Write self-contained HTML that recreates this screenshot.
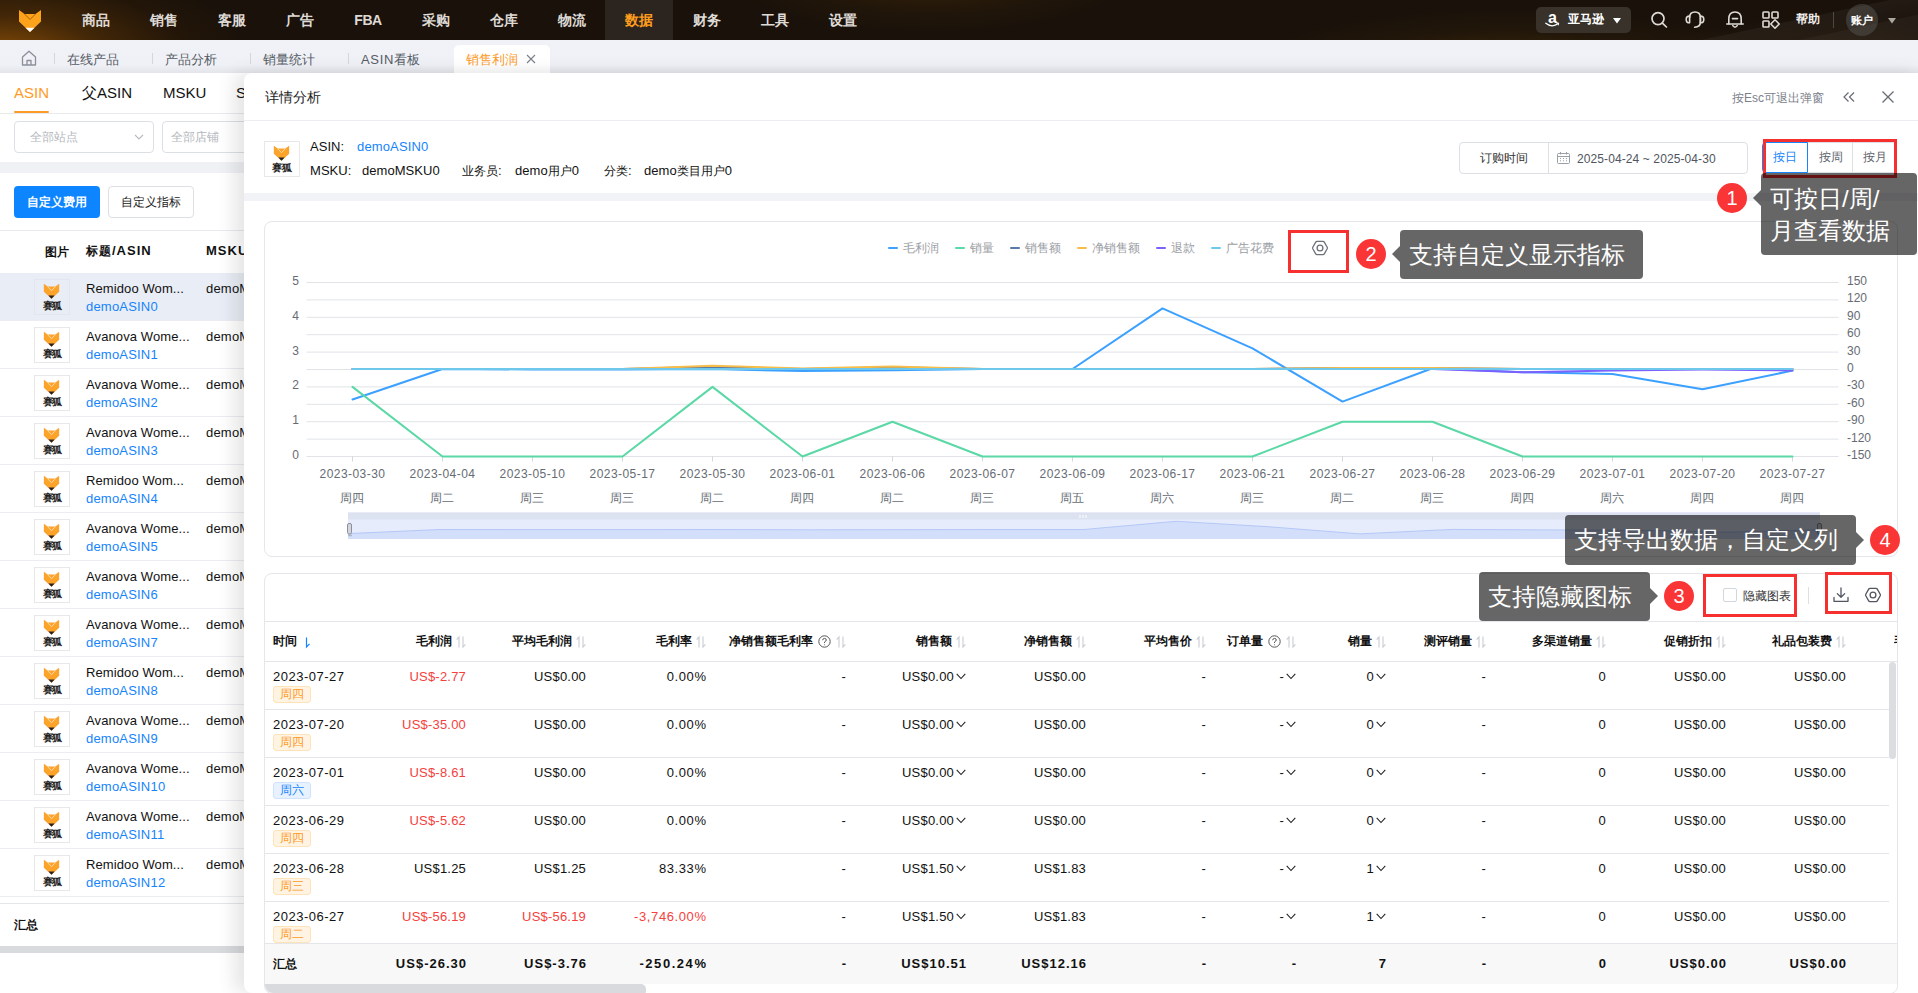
<!DOCTYPE html>
<html lang="zh">
<head>
<meta charset="utf-8">
<title>销售利润</title>
<style>
*{box-sizing:border-box;margin:0;padding:0}
html,body{width:1918px;height:993px;overflow:hidden;background:#fff}
body{font-family:"Liberation Sans",sans-serif;font-size:12px;color:#111;position:relative}
.abs{position:absolute}
svg{display:block;overflow:visible}
/* top nav */
#nav{position:absolute;left:0;top:0;width:1918px;height:40px;background:#19110a;overflow:hidden}
#nav .glow1{position:absolute;left:-60px;top:-40px;width:300px;height:140px;background:radial-gradient(ellipse at 20% 70%,rgba(170,95,5,.8) 0%,rgba(110,62,5,.5) 30%,rgba(60,34,4,.28) 55%,rgba(21,14,6,0) 75%)}
#nav .glow2{position:absolute;left:1250px;top:10px;width:520px;height:60px;background:radial-gradient(ellipse at 50% 100%,rgba(110,70,10,.55) 0%,rgba(60,40,8,.25) 45%,rgba(21,14,6,0) 75%)}
#nav .mi{position:absolute;top:0;height:40px;width:68px;line-height:40px;text-align:center;color:#dedad5;font-size:14px;font-weight:bold;letter-spacing:0}
#nav .mi.on{background:#2c251f;color:#ff9d1e}
/* tab bar */
#tabs{position:absolute;left:0;top:40px;width:1918px;height:33px;background:linear-gradient(#f1f2f7 0,#f0f1f6 75%,#e4e5ea 100%)}
#tabs .t{position:absolute;top:0;height:39px;line-height:39px;font-size:13px;color:#555c66;white-space:nowrap}
#tabs .sep{position:absolute;top:13px;width:1px;height:11px;background:#d3d6dc}
/* left page */
#left{position:absolute;left:0;top:73px;width:260px;height:920px;background:#fff;overflow:hidden}
.lrow{position:absolute;left:0;width:260px;height:48px;border-bottom:1px solid #ebedf0}
.lrow .im{position:absolute;left:34px;top:6px;width:36px;height:36px;border:1px solid #e8e8e8;background:#fff}
.lrow .t1{position:absolute;left:86px;top:8px;font-size:13px;color:#111;white-space:nowrap;letter-spacing:.1px}
.lrow .t2{position:absolute;left:86px;top:26px;font-size:13px;color:#1684fc;white-space:nowrap;letter-spacing:.2px}
.lrow .t3{position:absolute;left:206px;top:8px;font-size:13px;color:#111;white-space:nowrap;letter-spacing:.2px}
.fx{left:0;top:20px;width:34px;text-align:center;font-size:10px;font-weight:bold;color:#222;line-height:12px;letter-spacing:-.5px;font-family:"Liberation Serif",serif}

.it{font-size:13px;line-height:16px;color:#111;white-space:nowrap;letter-spacing:.05px}
.c12{font-size:12px;letter-spacing:0}
.ax{font-size:12px;line-height:14px;color:#666b73;white-space:nowrap}
.th{top:634px;font-size:12px;line-height:15px;font-weight:bold;color:#111;white-space:nowrap}
.td{font-size:13px;line-height:16px;color:#111;white-space:nowrap;letter-spacing:.2px}
.sb{font-weight:bold;letter-spacing:1px;margin-right:-1px}
.tag{width:38px;height:17px;border-radius:3px;font-size:12px;line-height:15px;text-align:center;border:1px solid}
.tag.o{background:#fff4e3;border-color:#ffe3b8;color:#fd9a27}
.tag.b{background:#e8f2ff;border-color:#cfe3ff;color:#1684fc}
.tip{background:rgba(0,0,0,.6);border-radius:4px;color:#fff;font-size:24px;white-space:nowrap}
.bd{width:30px;height:30px;border-radius:15px;background:#fa3535;color:#fff;font-size:20px;line-height:30px;text-align:center}
</style>
</head>
<body>
<!-- NAV -->
<div id="nav">
  <div class="glow1"></div><div class="glow2"></div><div class="abs" style="left:720px;top:-30px;width:420px;height:64px;background:radial-gradient(ellipse at 50% 0%,rgba(95,60,10,.5) 0%,rgba(60,38,8,.25) 45%,rgba(21,14,6,0) 72%)"></div><div class="abs" style="left:1640px;top:14px;width:340px;height:50px;background:radial-gradient(ellipse at 60% 100%,rgba(80,60,35,.35) 0%,rgba(21,14,6,0) 70%)"></div>
  <svg class="abs" style="left:18px;top:9px" width="24" height="24" viewBox="0 0 24 24">
    <path d="M1 1 L6.5 5 L17.5 5 L23 1 L23 12.5 L12 23 L1 12.5 Z" fill="#fda31b"/>
    <path d="M6.5 5 L12 10.5 L17.5 5" fill="none" stroke="#a8610c" stroke-width="1"/>
    <path d="M7.5 18.7 L16.5 18.7 L12 23 Z" fill="#fff"/>
  </svg>
  <div class="mi" style="left:62px">商品</div>
  <div class="mi" style="left:130px">销售</div>
  <div class="mi" style="left:198px">客服</div>
  <div class="mi" style="left:266px">广告</div>
  <div class="mi" style="left:334px;letter-spacing:-.5px">FBA</div>
  <div class="mi" style="left:402px">采购</div>
  <div class="mi" style="left:470px">仓库</div>
  <div class="mi" style="left:538px">物流</div>
  <div class="mi on" style="left:605px">数据</div>
  <div class="mi" style="left:673px">财务</div>
  <div class="mi" style="left:741px">工具</div>
  <div class="mi" style="left:809px">设置</div>

  <div class="abs" style="left:1536px;top:7px;width:95px;height:26px;border-radius:5px;background:#38322a"></div>
  <div class="abs" style="left:1547px;top:7px;width:11px;font-size:16px;font-weight:bold;color:#fff;line-height:22px;text-align:center">a</div>
  <svg class="abs" style="left:1545px;top:22px" width="15" height="6" viewBox="0 0 15 6" fill="none" stroke="#fff" stroke-width="1.3" stroke-linecap="round"><path d="M0.8 1.2 Q7 6.2 13.2 1.6"/><path d="M11.5 0.9 L13.7 1 L13.3 3" stroke-width="1"/></svg>
  <div class="abs" style="left:1568px;top:12px;font-size:12px;font-weight:bold;color:#fff;line-height:15px;white-space:nowrap">亚马逊</div>
  <svg class="abs" style="left:1613px;top:18px" width="8" height="6" viewBox="0 0 8 6"><path d="M0 0 H8 L4 5.6 Z" fill="#fff"/></svg>
  <svg class="abs" style="left:1650px;top:11px" width="18" height="18" viewBox="0 0 18 18" fill="none" stroke="#dedbd7" stroke-width="1.7" stroke-linecap="round"><circle cx="8" cy="7.6" r="6"/><path d="M12.4 12.2 L16.4 16"/></svg>
  <svg class="abs" style="left:1685px;top:11px" width="20" height="18" viewBox="0 0 20 18" fill="none" stroke="#dedbd7" stroke-width="1.6" stroke-linecap="round" stroke-linejoin="round"><path d="M4.6 6.6 Q4.6 1 10 1 Q15.4 1 15.4 6.6 V11 Q15.4 16 9.6 16.2"/><path d="M4.6 5 Q1.2 5 1.2 8.4 Q1.2 11.8 4.6 11.8 Z"/><path d="M15.4 5 Q18.8 5 18.8 8.4 Q18.8 11.8 15.4 11.8 Z"/></svg>
  <svg class="abs" style="left:1726px;top:11px" width="18" height="18" viewBox="0 0 18 18" fill="none" stroke="#dedbd7" stroke-width="1.6" stroke-linecap="round" stroke-linejoin="round"><path d="M2.8 12.8 V8 Q2.8 1 9 1 Q15.2 1 15.2 8 V12.8"/><path d="M0.8 13 H17.2"/><path d="M6.8 14.6 Q9 17.6 11.2 14.6"/><path d="M6.4 7.6 H11.6"/></svg>
  <svg class="abs" style="left:1762px;top:11px" width="18" height="18" viewBox="0 0 18 18" fill="none" stroke="#dedbd7" stroke-width="1.6" stroke-linejoin="round"><rect x="1" y="1" width="6" height="6" rx="0.8"/><rect x="10" y="1" width="6" height="6" rx="0.8"/><rect x="1" y="10" width="6" height="6" rx="0.8"/><path d="M13 8.8 L17.2 13 L13 17.2 L8.8 13 Z"/></svg>
  <div class="abs" style="left:1796px;top:12px;font-size:12px;font-weight:bold;color:#f0eeec;line-height:15px;white-space:nowrap">帮助</div>
  <div class="abs" style="left:1833px;top:12px;width:1px;height:16px;background:#4a433b"></div>
  <div class="abs" style="left:1846px;top:4px;width:32px;height:32px;border-radius:16px;background:#37312b;font-size:11px;font-weight:bold;color:#fff;line-height:33px;text-align:center;letter-spacing:-.3px">账户</div>
  <svg class="abs" style="left:1888px;top:18px" width="8" height="6" viewBox="0 0 8 6"><path d="M0 0 H8 L4 5.4 Z" fill="#a9a49e"/></svg>
  <div class="abs" style="left:1620px;top:0;width:298px;height:40px;background:linear-gradient(168deg,rgba(255,255,255,0) 55%,rgba(255,255,255,.045) 56%,rgba(255,255,255,.02) 75%,rgba(255,255,255,.05) 76%,rgba(255,255,255,.03) 100%)"></div>
</div>
<!-- TABS -->
<div id="tabs">
  <svg class="abs" style="left:21px;top:10px" width="16" height="16" viewBox="0 0 16 16" fill="none" stroke="#8a8f99" stroke-width="1.3" stroke-linejoin="round"><path d="M1.5 7 L8 1.3 L14.5 7 L14.5 15 L1.5 15 Z"/><path d="M6 15 L6 10.5 L10 10.5 L10 15"/></svg>
  <div class="sep" style="left:54px"></div>
  <div class="t" style="left:67px">在线产品</div>
  <div class="sep" style="left:152px"></div>
  <div class="t" style="left:165px">产品分析</div>
  <div class="sep" style="left:250px"></div>
  <div class="t" style="left:263px">销量统计</div>
  <div class="sep" style="left:348px"></div>
  <div class="t" style="left:361px"><span style="letter-spacing:.7px">ASIN</span>看板</div>
  <div class="abs" style="left:454px;top:5px;width:96px;height:28px;background:linear-gradient(#fff 70%,#fafafb 100%);border-radius:5px 5px 0 0"></div>
  <div class="t" style="left:466px;color:#fd9a27">销售利润</div>
  <svg class="abs" style="left:526px;top:14px" width="10" height="10" viewBox="0 0 10 10" stroke="#7a8088" stroke-width="1.1"><path d="M1 1 L9 9 M9 1 L1 9"/></svg>
</div>
<!-- LEFT -->
<div id="left">
<div class="abs" style="left:14px;top:11px;font-size:15px;color:#fd9a27;letter-spacing:0">ASIN</div>
<div class="abs" style="left:82px;top:11px;font-size:15px;color:#111;letter-spacing:0">父ASIN</div>
<div class="abs" style="left:163px;top:11px;font-size:15px;color:#111;letter-spacing:0">MSKU</div>
<div class="abs" style="left:236px;top:11px;font-size:15px;color:#111">SKU</div>
<div class="abs" style="left:0;top:40px;width:260px;height:1px;background:#e8eaee"></div>
<div class="abs" style="left:14px;top:38px;width:35px;height:2px;background:#fd9a27;border-radius:1px"></div>
<div class="abs" style="left:14px;top:48px;width:140px;height:32px;border:1px solid #dcdfe4;border-radius:4px"><span class="abs" style="left:15px;top:7px;font-size:12px;color:#b4b7bd">全部站点</span><svg class="abs" style="left:119px;top:12px" width="10" height="7" viewBox="0 0 10 7" fill="none" stroke="#b9bcc2" stroke-width="1.2"><path d="M1 1 L5 5 L9 1"/></svg></div>
<div class="abs" style="left:162px;top:48px;width:140px;height:32px;border:1px solid #dcdfe4;border-radius:4px"><span class="abs" style="left:8px;top:7px;font-size:12px;color:#b4b7bd">全部店铺</span></div>
<div class="abs" style="left:0;top:89px;width:260px;height:11px;background:#f0f1f5"></div>
<div class="abs" style="left:14px;top:113px;width:86px;height:32px;background:#0d85ff;border-radius:4px;color:#fff;font-size:12px;font-weight:bold;line-height:32px;text-align:center">自定义费用</div>
<div class="abs" style="left:108px;top:113px;width:86px;height:32px;background:#fff;border:1px solid #dcdfe4;border-radius:4px;color:#222;font-size:12px;line-height:30px;text-align:center">自定义指标</div>
<div class="abs" style="left:0;top:157px;width:260px;height:1px;background:#e8eaee"></div>
<div class="abs" style="left:45px;top:171px;font-size:12px;font-weight:bold;color:#111">图片</div>
<div class="abs" style="left:86px;top:170px;font-size:13px;font-weight:bold;color:#111;letter-spacing:1px"><span style="font-size:12px">标题</span>/ASIN</div>
<div class="abs" style="left:206px;top:170px;font-size:13px;font-weight:bold;color:#111;letter-spacing:1px">MSKU</div>
<div class="lrow" style="top:200px;background:#e9edf5;"><div class="im" style="background:transparent;border-color:#e3e6ee"><svg class="abs" style="left:8px;top:3px" width="17" height="16" viewBox="0 0 24 23"><path d="M1 1 L6.5 5 L17.5 5 L23 1 L23 12.5 L12 22.5 L1 12.5 Z" fill="#fba32a"/><path d="M6.5 5.5 L12 11 L17.5 5.5" fill="none" stroke="#ffe2b0" stroke-width="1.3"/><path d="M7.5 18 L16.5 18 L12 22.5 Z" fill="#222"/></svg><div class="abs fx">赛狐</div></div><div class="t1">Remidoo Wom...</div><div class="t2">demoASIN0</div><div class="t3">demoMSKU0</div></div>
<div class="lrow" style="top:248px;"><div class="im"><svg class="abs" style="left:8px;top:3px" width="17" height="16" viewBox="0 0 24 23"><path d="M1 1 L6.5 5 L17.5 5 L23 1 L23 12.5 L12 22.5 L1 12.5 Z" fill="#fba32a"/><path d="M6.5 5.5 L12 11 L17.5 5.5" fill="none" stroke="#ffe2b0" stroke-width="1.3"/><path d="M7.5 18 L16.5 18 L12 22.5 Z" fill="#222"/></svg><div class="abs fx">赛狐</div></div><div class="t1">Avanova Wome...</div><div class="t2">demoASIN1</div><div class="t3">demoMSKU1</div></div>
<div class="lrow" style="top:296px;"><div class="im"><svg class="abs" style="left:8px;top:3px" width="17" height="16" viewBox="0 0 24 23"><path d="M1 1 L6.5 5 L17.5 5 L23 1 L23 12.5 L12 22.5 L1 12.5 Z" fill="#fba32a"/><path d="M6.5 5.5 L12 11 L17.5 5.5" fill="none" stroke="#ffe2b0" stroke-width="1.3"/><path d="M7.5 18 L16.5 18 L12 22.5 Z" fill="#222"/></svg><div class="abs fx">赛狐</div></div><div class="t1">Avanova Wome...</div><div class="t2">demoASIN2</div><div class="t3">demoMSKU2</div></div>
<div class="lrow" style="top:344px;"><div class="im"><svg class="abs" style="left:8px;top:3px" width="17" height="16" viewBox="0 0 24 23"><path d="M1 1 L6.5 5 L17.5 5 L23 1 L23 12.5 L12 22.5 L1 12.5 Z" fill="#fba32a"/><path d="M6.5 5.5 L12 11 L17.5 5.5" fill="none" stroke="#ffe2b0" stroke-width="1.3"/><path d="M7.5 18 L16.5 18 L12 22.5 Z" fill="#222"/></svg><div class="abs fx">赛狐</div></div><div class="t1">Avanova Wome...</div><div class="t2">demoASIN3</div><div class="t3">demoMSKU3</div></div>
<div class="lrow" style="top:392px;"><div class="im"><svg class="abs" style="left:8px;top:3px" width="17" height="16" viewBox="0 0 24 23"><path d="M1 1 L6.5 5 L17.5 5 L23 1 L23 12.5 L12 22.5 L1 12.5 Z" fill="#fba32a"/><path d="M6.5 5.5 L12 11 L17.5 5.5" fill="none" stroke="#ffe2b0" stroke-width="1.3"/><path d="M7.5 18 L16.5 18 L12 22.5 Z" fill="#222"/></svg><div class="abs fx">赛狐</div></div><div class="t1">Remidoo Wom...</div><div class="t2">demoASIN4</div><div class="t3">demoMSKU4</div></div>
<div class="lrow" style="top:440px;"><div class="im"><svg class="abs" style="left:8px;top:3px" width="17" height="16" viewBox="0 0 24 23"><path d="M1 1 L6.5 5 L17.5 5 L23 1 L23 12.5 L12 22.5 L1 12.5 Z" fill="#fba32a"/><path d="M6.5 5.5 L12 11 L17.5 5.5" fill="none" stroke="#ffe2b0" stroke-width="1.3"/><path d="M7.5 18 L16.5 18 L12 22.5 Z" fill="#222"/></svg><div class="abs fx">赛狐</div></div><div class="t1">Avanova Wome...</div><div class="t2">demoASIN5</div><div class="t3">demoMSKU5</div></div>
<div class="lrow" style="top:488px;"><div class="im"><svg class="abs" style="left:8px;top:3px" width="17" height="16" viewBox="0 0 24 23"><path d="M1 1 L6.5 5 L17.5 5 L23 1 L23 12.5 L12 22.5 L1 12.5 Z" fill="#fba32a"/><path d="M6.5 5.5 L12 11 L17.5 5.5" fill="none" stroke="#ffe2b0" stroke-width="1.3"/><path d="M7.5 18 L16.5 18 L12 22.5 Z" fill="#222"/></svg><div class="abs fx">赛狐</div></div><div class="t1">Avanova Wome...</div><div class="t2">demoASIN6</div><div class="t3">demoMSKU6</div></div>
<div class="lrow" style="top:536px;"><div class="im"><svg class="abs" style="left:8px;top:3px" width="17" height="16" viewBox="0 0 24 23"><path d="M1 1 L6.5 5 L17.5 5 L23 1 L23 12.5 L12 22.5 L1 12.5 Z" fill="#fba32a"/><path d="M6.5 5.5 L12 11 L17.5 5.5" fill="none" stroke="#ffe2b0" stroke-width="1.3"/><path d="M7.5 18 L16.5 18 L12 22.5 Z" fill="#222"/></svg><div class="abs fx">赛狐</div></div><div class="t1">Avanova Wome...</div><div class="t2">demoASIN7</div><div class="t3">demoMSKU7</div></div>
<div class="lrow" style="top:584px;"><div class="im"><svg class="abs" style="left:8px;top:3px" width="17" height="16" viewBox="0 0 24 23"><path d="M1 1 L6.5 5 L17.5 5 L23 1 L23 12.5 L12 22.5 L1 12.5 Z" fill="#fba32a"/><path d="M6.5 5.5 L12 11 L17.5 5.5" fill="none" stroke="#ffe2b0" stroke-width="1.3"/><path d="M7.5 18 L16.5 18 L12 22.5 Z" fill="#222"/></svg><div class="abs fx">赛狐</div></div><div class="t1">Remidoo Wom...</div><div class="t2">demoASIN8</div><div class="t3">demoMSKU8</div></div>
<div class="lrow" style="top:632px;"><div class="im"><svg class="abs" style="left:8px;top:3px" width="17" height="16" viewBox="0 0 24 23"><path d="M1 1 L6.5 5 L17.5 5 L23 1 L23 12.5 L12 22.5 L1 12.5 Z" fill="#fba32a"/><path d="M6.5 5.5 L12 11 L17.5 5.5" fill="none" stroke="#ffe2b0" stroke-width="1.3"/><path d="M7.5 18 L16.5 18 L12 22.5 Z" fill="#222"/></svg><div class="abs fx">赛狐</div></div><div class="t1">Avanova Wome...</div><div class="t2">demoASIN9</div><div class="t3">demoMSKU9</div></div>
<div class="lrow" style="top:680px;"><div class="im"><svg class="abs" style="left:8px;top:3px" width="17" height="16" viewBox="0 0 24 23"><path d="M1 1 L6.5 5 L17.5 5 L23 1 L23 12.5 L12 22.5 L1 12.5 Z" fill="#fba32a"/><path d="M6.5 5.5 L12 11 L17.5 5.5" fill="none" stroke="#ffe2b0" stroke-width="1.3"/><path d="M7.5 18 L16.5 18 L12 22.5 Z" fill="#222"/></svg><div class="abs fx">赛狐</div></div><div class="t1">Avanova Wome...</div><div class="t2">demoASIN10</div><div class="t3">demoMSKU10</div></div>
<div class="lrow" style="top:728px;"><div class="im"><svg class="abs" style="left:8px;top:3px" width="17" height="16" viewBox="0 0 24 23"><path d="M1 1 L6.5 5 L17.5 5 L23 1 L23 12.5 L12 22.5 L1 12.5 Z" fill="#fba32a"/><path d="M6.5 5.5 L12 11 L17.5 5.5" fill="none" stroke="#ffe2b0" stroke-width="1.3"/><path d="M7.5 18 L16.5 18 L12 22.5 Z" fill="#222"/></svg><div class="abs fx">赛狐</div></div><div class="t1">Avanova Wome...</div><div class="t2">demoASIN11</div><div class="t3">demoMSKU11</div></div>
<div class="lrow" style="top:776px;"><div class="im"><svg class="abs" style="left:8px;top:3px" width="17" height="16" viewBox="0 0 24 23"><path d="M1 1 L6.5 5 L17.5 5 L23 1 L23 12.5 L12 22.5 L1 12.5 Z" fill="#fba32a"/><path d="M6.5 5.5 L12 11 L17.5 5.5" fill="none" stroke="#ffe2b0" stroke-width="1.3"/><path d="M7.5 18 L16.5 18 L12 22.5 Z" fill="#222"/></svg><div class="abs fx">赛狐</div></div><div class="t1">Remidoo Wom...</div><div class="t2">demoASIN12</div><div class="t3">demoMSKU12</div></div>
<div class="lrow" style="top:824px;"><div class="im"><svg class="abs" style="left:8px;top:3px" width="17" height="16" viewBox="0 0 24 23"><path d="M1 1 L6.5 5 L17.5 5 L23 1 L23 12.5 L12 22.5 L1 12.5 Z" fill="#fba32a"/><path d="M6.5 5.5 L12 11 L17.5 5.5" fill="none" stroke="#ffe2b0" stroke-width="1.3"/><path d="M7.5 18 L16.5 18 L12 22.5 Z" fill="#222"/></svg><div class="abs fx">赛狐</div></div><div class="t1">Avanova Wome...</div><div class="t2">demoASIN13</div><div class="t3">demoMSKU13</div></div>
<div class="abs" style="left:0;top:830px;width:260px;height:90px;background:#fff;border-top:1px solid #e4e6ea"></div>
<div class="abs" style="left:14px;top:844px;font-size:12px;font-weight:bold;color:#111">汇总</div>
<div class="abs" style="left:0;top:872.5px;width:260px;height:7px;background:#d9dadd"></div>
</div>
<!-- DRAWER -->
<div id="drawer">
<div class="abs" style="left:244px;top:73px;width:1680px;height:920px;background:#fff;border-radius:8px 0 0 8px;box-shadow:-10px 0 18px rgba(0,0,0,.10)"></div>
<div class="abs" style="left:265px;top:89px;font-size:14px;color:#222;line-height:17px">详情分析</div>
<div class="abs" style="left:1732px;top:91px;font-size:12px;color:#7b808a;line-height:14px;white-space:nowrap">按Esc可退出弹窗</div>
<svg class="abs" style="left:1843px;top:92px" width="12" height="10" viewBox="0 0 12 10" fill="none" stroke="#666b74" stroke-width="1.2"><path d="M5.5 0.5 L1 5 L5.5 9.5 M11 0.5 L6.5 5 L11 9.5"/></svg>
<svg class="abs" style="left:1882px;top:91px" width="12" height="12" viewBox="0 0 12 12" fill="none" stroke="#666b74" stroke-width="1.3"><path d="M0.5 0.5 L11.5 11.5 M11.5 0.5 L0.5 11.5"/></svg>
<div class="abs" style="left:244px;top:120px;width:1674px;height:1px;background:#ebedf0"></div>
<div class="abs" style="left:264px;top:141px;width:36px;height:36px;border:1px solid #e8e8e8;background:#fff"><svg class="abs" style="left:8px;top:3px" width="17" height="16" viewBox="0 0 24 23"><path d="M1 1 L6.5 5 L17.5 5 L23 1 L23 12.5 L12 22.5 L1 12.5 Z" fill="#fba32a"/><path d="M6.5 5.5 L12 11 L17.5 5.5" fill="none" stroke="#ffe2b0" stroke-width="1.3"/><path d="M7.5 18 L16.5 18 L12 22.5 Z" fill="#222"/></svg><div class="abs fx" style="width:33px">赛狐</div></div>
<div class="abs it" style="left:310px;top:139px">ASIN:</div><div class="abs it" style="left:357px;top:139px;color:#1684fc;letter-spacing:.15px">demoASIN0</div>
<div class="abs it" style="left:310px;top:163px">MSKU:</div><div class="abs it" style="left:362px;top:163px">demoMSKU0</div>
<div class="abs it" style="left:462px;top:163px"><span class="c12">业务员</span>:</div><div class="abs it" style="left:515px;top:163px">demo<span class="c12">用户</span>0</div>
<div class="abs it" style="left:604px;top:163px"><span class="c12">分类</span>:</div><div class="abs it" style="left:644px;top:163px">demo<span class="c12">类目用户</span>0</div>
<div class="abs" style="left:1459px;top:142px;width:289px;height:32px;border:1px solid #dcdfe4;border-radius:4px"></div>
<div class="abs" style="left:1548px;top:142px;width:1px;height:32px;background:#dcdfe4"></div>
<div class="abs" style="left:1459px;top:142px;width:89px;height:32px;line-height:32px;text-align:center;font-size:12px;color:#333">订购时间</div>
<svg class="abs" style="left:1557px;top:152px" width="13" height="12" viewBox="0 0 13 12" fill="none" stroke="#9a9fa8" stroke-width="1"><rect x="0.5" y="1.5" width="12" height="10" rx="1"/><path d="M0.5 4.5 L12.5 4.5 M3.5 0 L3.5 2.5 M9.5 0 L9.5 2.5"/><path d="M3 6.5h1M6 6.5h1M9 6.5h1M3 8.8h1M6 8.8h1M9 8.8h1" stroke-width="1"/></svg>
<div class="abs" style="left:1577px;top:142px;height:32px;line-height:34px;font-size:12px;color:#50555e;white-space:nowrap;letter-spacing:.1px">2025-04-24 ~ 2025-04-30</div>
<div class="abs" style="left:1762px;top:142px;width:135px;height:31px;border:1px solid #dcdfe4;border-radius:4px"></div>
<div class="abs" style="left:1852px;top:142px;width:1px;height:31px;background:#dcdfe4"></div>
<div class="abs" style="left:1762px;top:142px;width:46px;height:31px;border:1px solid #1684fc;border-radius:4px 0 0 4px"></div>
<div class="abs" style="left:1762px;top:142px;width:45px;height:31px;line-height:31px;text-align:center;font-size:12px;color:#1684fc">按日</div>
<div class="abs" style="left:1808px;top:142px;width:45px;height:31px;line-height:31px;text-align:center;font-size:12px;color:#5d626b">按周</div>
<div class="abs" style="left:1852px;top:142px;width:45px;height:31px;line-height:31px;text-align:center;font-size:12px;color:#5d626b">按月</div>
<div class="abs" style="left:244px;top:193px;width:1674px;height:8px;background:#f2f3f7"></div>
<div class="abs" style="left:264px;top:221px;width:1634px;height:336px;border:1px solid #e4e6ea;border-radius:8px"></div>
<div class="abs" style="left:888px;top:247px;width:10px;height:2px;border-radius:1px;background:#3ba0ff"></div><div class="abs" style="left:903px;top:241px;font-size:12px;line-height:14px;color:#9b9ea4;white-space:nowrap">毛利润</div>
<div class="abs" style="left:955px;top:247px;width:10px;height:2px;border-radius:1px;background:#5ad8a6"></div><div class="abs" style="left:970px;top:241px;font-size:12px;line-height:14px;color:#9b9ea4;white-space:nowrap">销量</div>
<div class="abs" style="left:1010px;top:247px;width:10px;height:2px;border-radius:1px;background:#5b7aa8"></div><div class="abs" style="left:1025px;top:241px;font-size:12px;line-height:14px;color:#9b9ea4;white-space:nowrap">销售额</div>
<div class="abs" style="left:1077px;top:247px;width:10px;height:2px;border-radius:1px;background:#f6bd4a"></div><div class="abs" style="left:1092px;top:241px;font-size:12px;line-height:14px;color:#9b9ea4;white-space:nowrap">净销售额</div>
<div class="abs" style="left:1156px;top:247px;width:10px;height:2px;border-radius:1px;background:#7b61ff"></div><div class="abs" style="left:1171px;top:241px;font-size:12px;line-height:14px;color:#9b9ea4;white-space:nowrap">退款</div>
<div class="abs" style="left:1211px;top:247px;width:10px;height:2px;border-radius:1px;background:#6dc8ec"></div><div class="abs" style="left:1226px;top:241px;font-size:12px;line-height:14px;color:#9b9ea4;white-space:nowrap">广告花费</div>
<svg class="abs" style="left:1312px;top:240px" width="16" height="16" viewBox="0 0 16 16" fill="none" stroke="#6b7079" stroke-width="1.3" stroke-linejoin="round"><path d="M5 1.4 L11 1.4 Q11.9 1.4 12.3 2.1 L15.2 7.2 Q15.6 8 15.2 8.8 L12.3 13.9 Q11.9 14.6 11 14.6 L5 14.6 Q4.1 14.6 3.7 13.9 L0.8 8.8 Q0.4 8 0.8 7.2 L3.7 2.1 Q4.1 1.4 5 1.4 Z"/><circle cx="8" cy="8" r="2.9"/></svg>
<svg class="abs" style="left:0;top:0" width="1918" height="993" viewBox="0 0 1918 993"><path d="M306.5 282.5 H1838.5" stroke="#e1e3e7" stroke-width="1" fill="none"/><path d="M306.5 299.9 H1838.5" stroke="#e1e3e7" stroke-width="1" fill="none"/><path d="M306.5 317.3 H1838.5" stroke="#e1e3e7" stroke-width="1" fill="none"/><path d="M306.5 334.7 H1838.5" stroke="#e1e3e7" stroke-width="1" fill="none"/><path d="M306.5 352.1 H1838.5" stroke="#e1e3e7" stroke-width="1" fill="none"/><path d="M306.5 369.5 H1838.5" stroke="#e1e3e7" stroke-width="1" fill="none"/><path d="M306.5 386.9 H1838.5" stroke="#e1e3e7" stroke-width="1" fill="none"/><path d="M306.5 404.3 H1838.5" stroke="#e1e3e7" stroke-width="1" fill="none"/><path d="M306.5 421.7 H1838.5" stroke="#e1e3e7" stroke-width="1" fill="none"/><path d="M306.5 439.1 H1838.5" stroke="#e1e3e7" stroke-width="1" fill="none"/><path d="M306.5 456.5 H1838.5" stroke="#e1e3e7" stroke-width="1" fill="none"/><path d="M352.5 456.5 V461.5" stroke="#d4d7dd" stroke-width="1"/><path d="M442.5 456.5 V461.5" stroke="#d4d7dd" stroke-width="1"/><path d="M532.5 456.5 V461.5" stroke="#d4d7dd" stroke-width="1"/><path d="M622.5 456.5 V461.5" stroke="#d4d7dd" stroke-width="1"/><path d="M712.5 456.5 V461.5" stroke="#d4d7dd" stroke-width="1"/><path d="M802.5 456.5 V461.5" stroke="#d4d7dd" stroke-width="1"/><path d="M892.5 456.5 V461.5" stroke="#d4d7dd" stroke-width="1"/><path d="M982.5 456.5 V461.5" stroke="#d4d7dd" stroke-width="1"/><path d="M1072.5 456.5 V461.5" stroke="#d4d7dd" stroke-width="1"/><path d="M1162.5 456.5 V461.5" stroke="#d4d7dd" stroke-width="1"/><path d="M1252.5 456.5 V461.5" stroke="#d4d7dd" stroke-width="1"/><path d="M1342.5 456.5 V461.5" stroke="#d4d7dd" stroke-width="1"/><path d="M1432.5 456.5 V461.5" stroke="#d4d7dd" stroke-width="1"/><path d="M1522.5 456.5 V461.5" stroke="#d4d7dd" stroke-width="1"/><path d="M1612.5 456.5 V461.5" stroke="#d4d7dd" stroke-width="1"/><path d="M1702.5 456.5 V461.5" stroke="#d4d7dd" stroke-width="1"/><path d="M1792.5 456.5 V461.5" stroke="#d4d7dd" stroke-width="1"/><path d="M352.5 399.5 L442.5 369.0 L532.5 369.5 L622.5 369.5 L712.5 369.0 L802.5 371.1 L892.5 370.2 L982.5 369.0 L1072.5 369.0 L1162.5 308.4 L1252.5 348.4 L1342.5 401.6 L1432.5 368.3 L1522.5 372.3 L1612.5 374.0 L1702.5 389.3 L1792.5 370.6" stroke="#3ba0ff" stroke-width="2" fill="none" stroke-linejoin="round" stroke-linecap="round"/><path d="M352.5 386.9 L442.5 456.5 L532.5 456.5 L622.5 456.5 L712.5 386.9 L802.5 456.5 L892.5 421.7 L982.5 456.5 L1072.5 456.5 L1162.5 456.5 L1252.5 456.5 L1342.5 421.7 L1432.5 421.7 L1522.5 456.5 L1612.5 456.5 L1702.5 456.5 L1792.5 456.5" stroke="#5ad8a6" stroke-width="2" fill="none" stroke-linejoin="round" stroke-linecap="round"/><path d="M352.5 369.0 L442.5 369.0 L532.5 369.0 L622.5 369.0 L712.5 366.7 L802.5 369.0 L892.5 367.3 L982.5 369.0 L1072.5 369.0 L1162.5 369.0 L1252.5 369.0 L1342.5 368.1 L1432.5 368.1 L1522.5 369.0 L1612.5 369.0 L1702.5 369.0 L1792.5 369.0" stroke="#5b7aa8" stroke-width="2" fill="none" stroke-linejoin="round" stroke-linecap="round"/><path d="M352.5 369.0 L442.5 369.0 L532.5 369.0 L622.5 369.0 L712.5 365.8 L802.5 368.4 L892.5 366.4 L982.5 369.0 L1072.5 369.0 L1162.5 369.0 L1252.5 369.0 L1342.5 367.9 L1432.5 367.9 L1522.5 369.0 L1612.5 369.0 L1702.5 369.0 L1792.5 369.0" stroke="#f6bd4a" stroke-width="2" fill="none" stroke-linejoin="round" stroke-linecap="round"/><path d="M352.5 369.0 L442.5 369.0 L532.5 369.0 L622.5 369.0 L712.5 369.0 L802.5 369.0 L892.5 369.0 L982.5 369.0 L1072.5 369.0 L1162.5 369.0 L1252.5 369.0 L1342.5 369.0 L1432.5 369.0 L1522.5 372.2 L1612.5 370.4 L1702.5 369.6 L1792.5 370.4" stroke="#7b61ff" stroke-width="2" fill="none" stroke-linejoin="round" stroke-linecap="round"/><path d="M352.5 369.0 L442.5 369.0 L532.5 369.0 L622.5 369.0 L712.5 369.0 L802.5 369.0 L892.5 369.0 L982.5 369.0 L1072.5 369.0 L1162.5 369.0 L1252.5 369.0 L1342.5 369.0 L1432.5 369.0 L1522.5 369.0 L1612.5 369.0 L1702.5 369.0 L1792.5 369.0" stroke="#6dc8ec" stroke-width="2" fill="none" stroke-linejoin="round" stroke-linecap="round"/><rect x="348" y="512.5" width="1472" height="26.5" fill="#e7ecfc"/><rect x="348" y="512.5" width="1472" height="7" fill="#dde2f1"/><path d="M348 539 L348.0 533.6 L440.0 529.5 L532.0 529.6 L624.0 529.6 L716.0 529.5 L808.0 529.8 L900.0 529.7 L992.0 529.5 L1084.0 529.5 L1176.0 521.3 L1268.0 526.7 L1360.0 533.9 L1452.0 529.4 L1544.0 529.9 L1636.0 530.2 L1728.0 532.2 L1820.0 529.7 L1820 539 Z" fill="#d3dffa"/><path d="M348.0 533.6 L440.0 529.5 L532.0 529.6 L624.0 529.6 L716.0 529.5 L808.0 529.8 L900.0 529.7 L992.0 529.5 L1084.0 529.5 L1176.0 521.3 L1268.0 526.7 L1360.0 533.9 L1452.0 529.4 L1544.0 529.9 L1636.0 530.2 L1728.0 532.2 L1820.0 529.7" fill="none" stroke="#b4c8f7" stroke-width="1"/><rect x="347.5" y="523.5" width="4" height="10.5" rx="1.5" fill="#d3d6de" stroke="#8b909c" stroke-width="1"/><path d="M348 535.5 h4" stroke="#9aa0ae" stroke-width="1.5" opacity=".6"/><rect x="1817.5" y="523.5" width="4" height="10.5" rx="1.5" fill="#d3d6de" stroke="#8b909c" stroke-width="1"/><path d="M1080 515 v3 M1083 515 v3 M1086 515 v3" stroke="#fff" stroke-width="1"/></svg>
<div class="abs ax" style="left:270px;top:274.0px;width:29px;text-align:right">5</div>
<div class="abs ax" style="left:270px;top:308.8px;width:29px;text-align:right">4</div>
<div class="abs ax" style="left:270px;top:343.6px;width:29px;text-align:right">3</div>
<div class="abs ax" style="left:270px;top:378.4px;width:29px;text-align:right">2</div>
<div class="abs ax" style="left:270px;top:413.2px;width:29px;text-align:right">1</div>
<div class="abs ax" style="left:270px;top:448.0px;width:29px;text-align:right">0</div>
<div class="abs ax" style="left:1847px;top:274.0px">150</div>
<div class="abs ax" style="left:1847px;top:291.4px">120</div>
<div class="abs ax" style="left:1847px;top:308.8px">90</div>
<div class="abs ax" style="left:1847px;top:326.2px">60</div>
<div class="abs ax" style="left:1847px;top:343.6px">30</div>
<div class="abs ax" style="left:1847px;top:361.0px">0</div>
<div class="abs ax" style="left:1847px;top:378.4px">-30</div>
<div class="abs ax" style="left:1847px;top:395.8px">-60</div>
<div class="abs ax" style="left:1847px;top:413.2px">-90</div>
<div class="abs ax" style="left:1847px;top:430.6px">-120</div>
<div class="abs ax" style="left:1847px;top:448.0px">-150</div>
<div class="abs ax" style="left:307.5px;top:467px;width:90px;text-align:center;letter-spacing:.45px">2023-03-30</div><div class="abs ax" style="left:306.5px;top:490.5px;width:90px;text-align:center">周四</div>
<div class="abs ax" style="left:397.5px;top:467px;width:90px;text-align:center;letter-spacing:.45px">2023-04-04</div><div class="abs ax" style="left:396.5px;top:490.5px;width:90px;text-align:center">周二</div>
<div class="abs ax" style="left:487.5px;top:467px;width:90px;text-align:center;letter-spacing:.45px">2023-05-10</div><div class="abs ax" style="left:486.5px;top:490.5px;width:90px;text-align:center">周三</div>
<div class="abs ax" style="left:577.5px;top:467px;width:90px;text-align:center;letter-spacing:.45px">2023-05-17</div><div class="abs ax" style="left:576.5px;top:490.5px;width:90px;text-align:center">周三</div>
<div class="abs ax" style="left:667.5px;top:467px;width:90px;text-align:center;letter-spacing:.45px">2023-05-30</div><div class="abs ax" style="left:666.5px;top:490.5px;width:90px;text-align:center">周二</div>
<div class="abs ax" style="left:757.5px;top:467px;width:90px;text-align:center;letter-spacing:.45px">2023-06-01</div><div class="abs ax" style="left:756.5px;top:490.5px;width:90px;text-align:center">周四</div>
<div class="abs ax" style="left:847.5px;top:467px;width:90px;text-align:center;letter-spacing:.45px">2023-06-06</div><div class="abs ax" style="left:846.5px;top:490.5px;width:90px;text-align:center">周二</div>
<div class="abs ax" style="left:937.5px;top:467px;width:90px;text-align:center;letter-spacing:.45px">2023-06-07</div><div class="abs ax" style="left:936.5px;top:490.5px;width:90px;text-align:center">周三</div>
<div class="abs ax" style="left:1027.5px;top:467px;width:90px;text-align:center;letter-spacing:.45px">2023-06-09</div><div class="abs ax" style="left:1026.5px;top:490.5px;width:90px;text-align:center">周五</div>
<div class="abs ax" style="left:1117.5px;top:467px;width:90px;text-align:center;letter-spacing:.45px">2023-06-17</div><div class="abs ax" style="left:1116.5px;top:490.5px;width:90px;text-align:center">周六</div>
<div class="abs ax" style="left:1207.5px;top:467px;width:90px;text-align:center;letter-spacing:.45px">2023-06-21</div><div class="abs ax" style="left:1206.5px;top:490.5px;width:90px;text-align:center">周三</div>
<div class="abs ax" style="left:1297.5px;top:467px;width:90px;text-align:center;letter-spacing:.45px">2023-06-27</div><div class="abs ax" style="left:1296.5px;top:490.5px;width:90px;text-align:center">周二</div>
<div class="abs ax" style="left:1387.5px;top:467px;width:90px;text-align:center;letter-spacing:.45px">2023-06-28</div><div class="abs ax" style="left:1386.5px;top:490.5px;width:90px;text-align:center">周三</div>
<div class="abs ax" style="left:1477.5px;top:467px;width:90px;text-align:center;letter-spacing:.45px">2023-06-29</div><div class="abs ax" style="left:1476.5px;top:490.5px;width:90px;text-align:center">周四</div>
<div class="abs ax" style="left:1567.5px;top:467px;width:90px;text-align:center;letter-spacing:.45px">2023-07-01</div><div class="abs ax" style="left:1566.5px;top:490.5px;width:90px;text-align:center">周六</div>
<div class="abs ax" style="left:1657.5px;top:467px;width:90px;text-align:center;letter-spacing:.45px">2023-07-20</div><div class="abs ax" style="left:1656.5px;top:490.5px;width:90px;text-align:center">周四</div>
<div class="abs ax" style="left:1747.5px;top:467px;width:90px;text-align:center;letter-spacing:.45px">2023-07-27</div><div class="abs ax" style="left:1746.5px;top:490.5px;width:90px;text-align:center">周四</div>
<div class="abs" style="left:264px;top:573px;width:1634px;height:421px;border:1px solid #e4e6ea;border-radius:8px"></div>
<div class="abs" style="left:265px;top:621px;width:1632px;height:1px;background:#e4e6ea"></div>
<div class="abs" style="left:265px;top:661px;width:1632px;height:1px;background:#e4e6ea"></div>
<div class="abs" style="left:1723px;top:588px;width:14px;height:14px;border:1px solid #d3d6dc;border-radius:2px;background:#fff"></div>
<div class="abs" style="left:1743px;top:589px;font-size:12px;line-height:14px;color:#333;white-space:nowrap">隐藏图表</div>
<div class="abs" style="left:1808px;top:587px;width:1px;height:17px;background:#dcdfe4"></div>
<svg class="abs" style="left:1833px;top:587px" width="16" height="16" viewBox="0 0 16 16" fill="none" stroke="#50555e" stroke-width="1.3" stroke-linecap="round" stroke-linejoin="round"><path d="M8 1 V10 M4.3 6.6 L8 10.3 L11.7 6.6 M1 10.5 V14.3 H15 V10.5"/></svg>
<svg class="abs" style="left:1865px;top:587px" width="16" height="16" viewBox="0 0 16 16" fill="none" stroke="#50555e" stroke-width="1.3" stroke-linejoin="round"><path d="M5 1.4 L11 1.4 Q11.9 1.4 12.3 2.1 L15.2 7.2 Q15.6 8 15.2 8.8 L12.3 13.9 Q11.9 14.6 11 14.6 L5 14.6 Q4.1 14.6 3.7 13.9 L0.8 8.8 Q0.4 8 0.8 7.2 L3.7 2.1 Q4.1 1.4 5 1.4 Z"/><circle cx="8" cy="8" r="2.9"/></svg>
<div class="abs th" style="left:273px">时间</div>
<svg class="abs" style="left:304px;top:637px" width="7" height="11" viewBox="0 0 7 11" fill="none" stroke="#1684fc" stroke-width="1.2"><path d="M2.5 0.5 V10 L5.5 6.8"/></svg>
<svg class="abs" style="left:456px;top:636px" width="10" height="12" viewBox="0 0 10 12" fill="none" stroke="#c9ccd2" stroke-width="1.1"><path d="M3 11.5 V1 L0.7 3.6 M7 0.5 V11 L9.3 8.4"/></svg>
<div class="abs th" style="right:1466px">毛利润</div>
<svg class="abs" style="left:576px;top:636px" width="10" height="12" viewBox="0 0 10 12" fill="none" stroke="#c9ccd2" stroke-width="1.1"><path d="M3 11.5 V1 L0.7 3.6 M7 0.5 V11 L9.3 8.4"/></svg>
<div class="abs th" style="right:1346px">平均毛利润</div>
<svg class="abs" style="left:696px;top:636px" width="10" height="12" viewBox="0 0 10 12" fill="none" stroke="#c9ccd2" stroke-width="1.1"><path d="M3 11.5 V1 L0.7 3.6 M7 0.5 V11 L9.3 8.4"/></svg>
<div class="abs th" style="right:1226px">毛利率</div>
<svg class="abs" style="left:836px;top:636px" width="10" height="12" viewBox="0 0 10 12" fill="none" stroke="#c9ccd2" stroke-width="1.1"><path d="M3 11.5 V1 L0.7 3.6 M7 0.5 V11 L9.3 8.4"/></svg>
<svg class="abs" style="left:818px;top:635px" width="13" height="13" viewBox="0 0 13 13" fill="none" stroke="#555" stroke-width="1"><circle cx="6.5" cy="6.5" r="5.7"/><path d="M4.7 5.2 Q4.7 3.4 6.5 3.4 Q8.3 3.4 8.3 5 Q8.3 6 6.5 7 V8"/><circle cx="6.5" cy="9.8" r=".5" fill="#555" stroke="none"/></svg>
<div class="abs th" style="right:1105px">净销售额毛利率</div>
<svg class="abs" style="left:956px;top:636px" width="10" height="12" viewBox="0 0 10 12" fill="none" stroke="#c9ccd2" stroke-width="1.1"><path d="M3 11.5 V1 L0.7 3.6 M7 0.5 V11 L9.3 8.4"/></svg>
<div class="abs th" style="right:966px">销售额</div>
<svg class="abs" style="left:1076px;top:636px" width="10" height="12" viewBox="0 0 10 12" fill="none" stroke="#c9ccd2" stroke-width="1.1"><path d="M3 11.5 V1 L0.7 3.6 M7 0.5 V11 L9.3 8.4"/></svg>
<div class="abs th" style="right:846px">净销售额</div>
<svg class="abs" style="left:1196px;top:636px" width="10" height="12" viewBox="0 0 10 12" fill="none" stroke="#c9ccd2" stroke-width="1.1"><path d="M3 11.5 V1 L0.7 3.6 M7 0.5 V11 L9.3 8.4"/></svg>
<div class="abs th" style="right:726px">平均售价</div>
<svg class="abs" style="left:1286px;top:636px" width="10" height="12" viewBox="0 0 10 12" fill="none" stroke="#c9ccd2" stroke-width="1.1"><path d="M3 11.5 V1 L0.7 3.6 M7 0.5 V11 L9.3 8.4"/></svg>
<svg class="abs" style="left:1268px;top:635px" width="13" height="13" viewBox="0 0 13 13" fill="none" stroke="#555" stroke-width="1"><circle cx="6.5" cy="6.5" r="5.7"/><path d="M4.7 5.2 Q4.7 3.4 6.5 3.4 Q8.3 3.4 8.3 5 Q8.3 6 6.5 7 V8"/><circle cx="6.5" cy="9.8" r=".5" fill="#555" stroke="none"/></svg>
<div class="abs th" style="right:655px">订单量</div>
<svg class="abs" style="left:1376px;top:636px" width="10" height="12" viewBox="0 0 10 12" fill="none" stroke="#c9ccd2" stroke-width="1.1"><path d="M3 11.5 V1 L0.7 3.6 M7 0.5 V11 L9.3 8.4"/></svg>
<div class="abs th" style="right:546px">销量</div>
<svg class="abs" style="left:1476px;top:636px" width="10" height="12" viewBox="0 0 10 12" fill="none" stroke="#c9ccd2" stroke-width="1.1"><path d="M3 11.5 V1 L0.7 3.6 M7 0.5 V11 L9.3 8.4"/></svg>
<div class="abs th" style="right:446px">测评销量</div>
<svg class="abs" style="left:1596px;top:636px" width="10" height="12" viewBox="0 0 10 12" fill="none" stroke="#c9ccd2" stroke-width="1.1"><path d="M3 11.5 V1 L0.7 3.6 M7 0.5 V11 L9.3 8.4"/></svg>
<div class="abs th" style="right:326px">多渠道销量</div>
<svg class="abs" style="left:1716px;top:636px" width="10" height="12" viewBox="0 0 10 12" fill="none" stroke="#c9ccd2" stroke-width="1.1"><path d="M3 11.5 V1 L0.7 3.6 M7 0.5 V11 L9.3 8.4"/></svg>
<div class="abs th" style="right:206px">促销折扣</div>
<svg class="abs" style="left:1836px;top:636px" width="10" height="12" viewBox="0 0 10 12" fill="none" stroke="#c9ccd2" stroke-width="1.1"><path d="M3 11.5 V1 L0.7 3.6 M7 0.5 V11 L9.3 8.4"/></svg>
<div class="abs th" style="right:86px">礼品包装费</div>
<div class="abs th" style="left:1894px;width:3px;overflow:hidden">毛利</div>
<div class="abs" style="left:265px;top:662px;width:1632px;height:282px;overflow:hidden">
<div class="abs td" style="left:8px;top:7px;letter-spacing:.5px">2023-07-27</div>
<div class="abs tag o" style="left:8px;top:24px">周四</div>
<div class="abs td" style="right:1431px;top:7px;color:#f5413d;">US$-2.77</div>
<div class="abs td" style="right:1311px;top:7px;">US$0.00</div>
<div class="abs td" style="right:1191px;top:7px;letter-spacing:.6px;margin-right:-.6px;">0.00%</div>
<div class="abs td" style="right:1051px;top:7px;">-</div>
<svg class="abs" style="left:691px;top:11px" width="10" height="7" viewBox="0 0 10 7" fill="none" stroke="#222" stroke-width="1.1"><path d="M0.7 0.8 L5 5.5 L9.3 0.8"/></svg>
<div class="abs td" style="right:943px;top:7px;">US$0.00</div>
<div class="abs td" style="right:811px;top:7px;">US$0.00</div>
<div class="abs td" style="right:691px;top:7px;">-</div>
<svg class="abs" style="left:1021px;top:11px" width="10" height="7" viewBox="0 0 10 7" fill="none" stroke="#222" stroke-width="1.1"><path d="M0.7 0.8 L5 5.5 L9.3 0.8"/></svg>
<div class="abs td" style="right:613px;top:7px;">-</div>
<svg class="abs" style="left:1111px;top:11px" width="10" height="7" viewBox="0 0 10 7" fill="none" stroke="#222" stroke-width="1.1"><path d="M0.7 0.8 L5 5.5 L9.3 0.8"/></svg>
<div class="abs td" style="right:523px;top:7px;">0</div>
<div class="abs td" style="right:411px;top:7px;">-</div>
<div class="abs td" style="right:291px;top:7px;">0</div>
<div class="abs td" style="right:171px;top:7px;">US$0.00</div>
<div class="abs td" style="right:51px;top:7px;">US$0.00</div>
<div class="abs" style="left:0;top:47px;width:1624px;height:1px;background:#e4e6ea"></div>
<div class="abs td" style="left:8px;top:55px;letter-spacing:.5px">2023-07-20</div>
<div class="abs tag o" style="left:8px;top:72px">周四</div>
<div class="abs td" style="right:1431px;top:55px;color:#f5413d;">US$-35.00</div>
<div class="abs td" style="right:1311px;top:55px;">US$0.00</div>
<div class="abs td" style="right:1191px;top:55px;letter-spacing:.6px;margin-right:-.6px;">0.00%</div>
<div class="abs td" style="right:1051px;top:55px;">-</div>
<svg class="abs" style="left:691px;top:59px" width="10" height="7" viewBox="0 0 10 7" fill="none" stroke="#222" stroke-width="1.1"><path d="M0.7 0.8 L5 5.5 L9.3 0.8"/></svg>
<div class="abs td" style="right:943px;top:55px;">US$0.00</div>
<div class="abs td" style="right:811px;top:55px;">US$0.00</div>
<div class="abs td" style="right:691px;top:55px;">-</div>
<svg class="abs" style="left:1021px;top:59px" width="10" height="7" viewBox="0 0 10 7" fill="none" stroke="#222" stroke-width="1.1"><path d="M0.7 0.8 L5 5.5 L9.3 0.8"/></svg>
<div class="abs td" style="right:613px;top:55px;">-</div>
<svg class="abs" style="left:1111px;top:59px" width="10" height="7" viewBox="0 0 10 7" fill="none" stroke="#222" stroke-width="1.1"><path d="M0.7 0.8 L5 5.5 L9.3 0.8"/></svg>
<div class="abs td" style="right:523px;top:55px;">0</div>
<div class="abs td" style="right:411px;top:55px;">-</div>
<div class="abs td" style="right:291px;top:55px;">0</div>
<div class="abs td" style="right:171px;top:55px;">US$0.00</div>
<div class="abs td" style="right:51px;top:55px;">US$0.00</div>
<div class="abs" style="left:0;top:95px;width:1624px;height:1px;background:#e4e6ea"></div>
<div class="abs td" style="left:8px;top:103px;letter-spacing:.5px">2023-07-01</div>
<div class="abs tag b" style="left:8px;top:120px">周六</div>
<div class="abs td" style="right:1431px;top:103px;color:#f5413d;">US$-8.61</div>
<div class="abs td" style="right:1311px;top:103px;">US$0.00</div>
<div class="abs td" style="right:1191px;top:103px;letter-spacing:.6px;margin-right:-.6px;">0.00%</div>
<div class="abs td" style="right:1051px;top:103px;">-</div>
<svg class="abs" style="left:691px;top:107px" width="10" height="7" viewBox="0 0 10 7" fill="none" stroke="#222" stroke-width="1.1"><path d="M0.7 0.8 L5 5.5 L9.3 0.8"/></svg>
<div class="abs td" style="right:943px;top:103px;">US$0.00</div>
<div class="abs td" style="right:811px;top:103px;">US$0.00</div>
<div class="abs td" style="right:691px;top:103px;">-</div>
<svg class="abs" style="left:1021px;top:107px" width="10" height="7" viewBox="0 0 10 7" fill="none" stroke="#222" stroke-width="1.1"><path d="M0.7 0.8 L5 5.5 L9.3 0.8"/></svg>
<div class="abs td" style="right:613px;top:103px;">-</div>
<svg class="abs" style="left:1111px;top:107px" width="10" height="7" viewBox="0 0 10 7" fill="none" stroke="#222" stroke-width="1.1"><path d="M0.7 0.8 L5 5.5 L9.3 0.8"/></svg>
<div class="abs td" style="right:523px;top:103px;">0</div>
<div class="abs td" style="right:411px;top:103px;">-</div>
<div class="abs td" style="right:291px;top:103px;">0</div>
<div class="abs td" style="right:171px;top:103px;">US$0.00</div>
<div class="abs td" style="right:51px;top:103px;">US$0.00</div>
<div class="abs" style="left:0;top:143px;width:1624px;height:1px;background:#e4e6ea"></div>
<div class="abs td" style="left:8px;top:151px;letter-spacing:.5px">2023-06-29</div>
<div class="abs tag o" style="left:8px;top:168px">周四</div>
<div class="abs td" style="right:1431px;top:151px;color:#f5413d;">US$-5.62</div>
<div class="abs td" style="right:1311px;top:151px;">US$0.00</div>
<div class="abs td" style="right:1191px;top:151px;letter-spacing:.6px;margin-right:-.6px;">0.00%</div>
<div class="abs td" style="right:1051px;top:151px;">-</div>
<svg class="abs" style="left:691px;top:155px" width="10" height="7" viewBox="0 0 10 7" fill="none" stroke="#222" stroke-width="1.1"><path d="M0.7 0.8 L5 5.5 L9.3 0.8"/></svg>
<div class="abs td" style="right:943px;top:151px;">US$0.00</div>
<div class="abs td" style="right:811px;top:151px;">US$0.00</div>
<div class="abs td" style="right:691px;top:151px;">-</div>
<svg class="abs" style="left:1021px;top:155px" width="10" height="7" viewBox="0 0 10 7" fill="none" stroke="#222" stroke-width="1.1"><path d="M0.7 0.8 L5 5.5 L9.3 0.8"/></svg>
<div class="abs td" style="right:613px;top:151px;">-</div>
<svg class="abs" style="left:1111px;top:155px" width="10" height="7" viewBox="0 0 10 7" fill="none" stroke="#222" stroke-width="1.1"><path d="M0.7 0.8 L5 5.5 L9.3 0.8"/></svg>
<div class="abs td" style="right:523px;top:151px;">0</div>
<div class="abs td" style="right:411px;top:151px;">-</div>
<div class="abs td" style="right:291px;top:151px;">0</div>
<div class="abs td" style="right:171px;top:151px;">US$0.00</div>
<div class="abs td" style="right:51px;top:151px;">US$0.00</div>
<div class="abs" style="left:0;top:191px;width:1624px;height:1px;background:#e4e6ea"></div>
<div class="abs td" style="left:8px;top:199px;letter-spacing:.5px">2023-06-28</div>
<div class="abs tag o" style="left:8px;top:216px">周三</div>
<div class="abs td" style="right:1431px;top:199px;">US$1.25</div>
<div class="abs td" style="right:1311px;top:199px;">US$1.25</div>
<div class="abs td" style="right:1191px;top:199px;letter-spacing:.6px;margin-right:-.6px;">83.33%</div>
<div class="abs td" style="right:1051px;top:199px;">-</div>
<svg class="abs" style="left:691px;top:203px" width="10" height="7" viewBox="0 0 10 7" fill="none" stroke="#222" stroke-width="1.1"><path d="M0.7 0.8 L5 5.5 L9.3 0.8"/></svg>
<div class="abs td" style="right:943px;top:199px;">US$1.50</div>
<div class="abs td" style="right:811px;top:199px;">US$1.83</div>
<div class="abs td" style="right:691px;top:199px;">-</div>
<svg class="abs" style="left:1021px;top:203px" width="10" height="7" viewBox="0 0 10 7" fill="none" stroke="#222" stroke-width="1.1"><path d="M0.7 0.8 L5 5.5 L9.3 0.8"/></svg>
<div class="abs td" style="right:613px;top:199px;">-</div>
<svg class="abs" style="left:1111px;top:203px" width="10" height="7" viewBox="0 0 10 7" fill="none" stroke="#222" stroke-width="1.1"><path d="M0.7 0.8 L5 5.5 L9.3 0.8"/></svg>
<div class="abs td" style="right:523px;top:199px;">1</div>
<div class="abs td" style="right:411px;top:199px;">-</div>
<div class="abs td" style="right:291px;top:199px;">0</div>
<div class="abs td" style="right:171px;top:199px;">US$0.00</div>
<div class="abs td" style="right:51px;top:199px;">US$0.00</div>
<div class="abs" style="left:0;top:239px;width:1624px;height:1px;background:#e4e6ea"></div>
<div class="abs td" style="left:8px;top:247px;letter-spacing:.5px">2023-06-27</div>
<div class="abs tag o" style="left:8px;top:264px">周二</div>
<div class="abs td" style="right:1431px;top:247px;color:#f5413d;">US$-56.19</div>
<div class="abs td" style="right:1311px;top:247px;color:#f5413d;">US$-56.19</div>
<div class="abs td" style="right:1191px;top:247px;color:#f5413d;letter-spacing:.6px;margin-right:-.6px;">-3,746.00%</div>
<div class="abs td" style="right:1051px;top:247px;">-</div>
<svg class="abs" style="left:691px;top:251px" width="10" height="7" viewBox="0 0 10 7" fill="none" stroke="#222" stroke-width="1.1"><path d="M0.7 0.8 L5 5.5 L9.3 0.8"/></svg>
<div class="abs td" style="right:943px;top:247px;">US$1.50</div>
<div class="abs td" style="right:811px;top:247px;">US$1.83</div>
<div class="abs td" style="right:691px;top:247px;">-</div>
<svg class="abs" style="left:1021px;top:251px" width="10" height="7" viewBox="0 0 10 7" fill="none" stroke="#222" stroke-width="1.1"><path d="M0.7 0.8 L5 5.5 L9.3 0.8"/></svg>
<div class="abs td" style="right:613px;top:247px;">-</div>
<svg class="abs" style="left:1111px;top:251px" width="10" height="7" viewBox="0 0 10 7" fill="none" stroke="#222" stroke-width="1.1"><path d="M0.7 0.8 L5 5.5 L9.3 0.8"/></svg>
<div class="abs td" style="right:523px;top:247px;">1</div>
<div class="abs td" style="right:411px;top:247px;">-</div>
<div class="abs td" style="right:291px;top:247px;">0</div>
<div class="abs td" style="right:171px;top:247px;">US$0.00</div>
<div class="abs td" style="right:51px;top:247px;">US$0.00</div>
<div class="abs" style="left:0;top:287px;width:1624px;height:1px;background:#e4e6ea"></div>
</div>
<div class="abs" style="left:1889px;top:662px;width:7px;height:97px;border-radius:4px;background:#dcdde1"></div>
<div class="abs" style="left:265px;top:943px;width:1632px;height:41px;background:#f8f8f8;border-top:1px solid #e4e6ea"></div>
<div class="abs" style="left:273px;top:956.5px;font-size:12px;font-weight:bold;line-height:15px">汇总</div>
<div class="abs td sb" style="right:1452px;top:955.5px;">US$-26.30</div>
<div class="abs td sb" style="right:1332px;top:955.5px;">US$-3.76</div>
<div class="abs td sb" style="right:1212px;top:955.5px;letter-spacing:1.55px;margin-right:-1.5px;">-250.24%</div>
<div class="abs td sb" style="right:1072px;top:955.5px;">-</div>
<div class="abs td sb" style="right:952px;top:955.5px;">US$10.51</div>
<div class="abs td sb" style="right:832px;top:955.5px;">US$12.16</div>
<div class="abs td sb" style="right:712px;top:955.5px;">-</div>
<div class="abs td sb" style="right:622px;top:955.5px;">-</div>
<div class="abs td sb" style="right:532px;top:955.5px;">7</div>
<div class="abs td sb" style="right:432px;top:955.5px;">-</div>
<div class="abs td sb" style="right:312px;top:955.5px;">0</div>
<div class="abs td sb" style="right:192px;top:955.5px;">US$0.00</div>
<div class="abs td sb" style="right:72px;top:955.5px;">US$0.00</div>
<div class="abs" style="left:265px;top:984px;width:1632px;height:9px;background:#fff;border-radius:0 0 8px 8px;overflow:hidden"><div class="abs" style="left:0;top:0;width:381px;height:12px;border-radius:0 5px 5px 0;background:#d9dadd"></div></div>
<div class="abs" style="left:1763px;top:139px;width:134px;height:39px;border:3px solid #f5302f"></div>
<div class="abs" style="left:1288px;top:230px;width:61px;height:43px;border:3px solid #f5302f"></div>
<div class="abs" style="left:1703px;top:574px;width:94px;height:43px;border:3px solid #f5302f"></div>
<div class="abs" style="left:1825px;top:572px;width:67px;height:42px;border:3px solid #f5302f"></div>
<div class="abs tip" style="left:1761px;top:173px;width:156px;height:82px"><div style="padding:10px 0 0 9px;line-height:32px">可按日/周/<br>月查看数据</div></div>
<div class="abs" style="left:1753px;top:190px;width:0;height:0;border-top:8px solid transparent;border-bottom:8px solid transparent;border-right:8px solid rgba(0,0,0,.6)"></div>
<div class="abs bd" style="left:1717px;top:183px">1</div>
<div class="abs tip" style="left:1400px;top:229.5px;width:243px;height:49px"><div style="padding:0 0 0 9px;line-height:49px">支持自定义显示指标</div></div>
<div class="abs" style="left:1392px;top:246px;width:0;height:0;border-top:8px solid transparent;border-bottom:8px solid transparent;border-right:8px solid rgba(0,0,0,.6)"></div>
<div class="abs bd" style="left:1356px;top:239px">2</div>
<div class="abs tip" style="left:1479px;top:571.5px;width:171px;height:49px"><div style="padding:0 0 0 9px;line-height:49px">支持隐藏图标</div></div>
<div class="abs" style="left:1650px;top:588px;width:0;height:0;border-top:8px solid transparent;border-bottom:8px solid transparent;border-left:8px solid rgba(0,0,0,.6)"></div>
<div class="abs bd" style="left:1664px;top:581px">3</div>
<div class="abs tip" style="left:1565px;top:515px;width:291px;height:49.5px"><div style="padding:0 0 0 9px;line-height:49px">支持导出数据，自定义列</div></div>
<div class="abs" style="left:1856px;top:532px;width:0;height:0;border-top:8px solid transparent;border-bottom:8px solid transparent;border-left:8px solid rgba(0,0,0,.6)"></div>
<div class="abs bd" style="left:1870px;top:525px">4</div>
</div>
</body>
</html>
